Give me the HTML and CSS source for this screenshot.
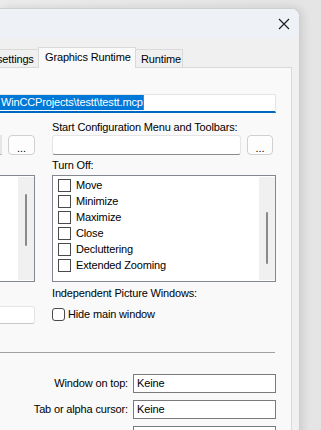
FILE: index.html
```html
<!DOCTYPE html>
<html lang="en">
<head>
    <meta charset="UTF-8">
    <meta name="viewport" content="width=device-width, initial-scale=1.0">
    <title>Computer Properties</title>
    <link rel="stylesheet" href="styles.css">
</head>
<body>

    <div class="window">
        <div class="titlebar">
            <svg class="close" width="12" height="12" viewBox="0 0 12 12">
                <path d="M1 1 L11 11 M11 1 L1 11" stroke="#1a1a1a" stroke-width="1.1" fill="none"/>
            </svg>
        </div>

        <div class="client">
            <div class="tabs">
                <div class="tab first">settings</div>
                <div class="tab active">Graphics Runtime</div>
                <div class="tab">Runtime</div>
            </div>

            <div class="page">
                <div class="path-field">
                    <span class="selected">WinCCProjects\testt\testt.mcp</span><span class="caret"></span>
                </div>

                <div class="grid">
                    <div></div>
                    <div class="label bottom">Start Configuration Menu and Toolbars:</div>

                    <div class="pick">
                        <div class="field"></div>
                        <button class="dots">...</button>
                    </div>
                    <div class="pick">
                        <div class="field"></div>
                        <button class="dots">...</button>
                    </div>

                    <div></div>
                    <div class="label middle">Turn Off:</div>

                    <div class="listbox left-list">
                        <div class="items"></div>
                        <div class="scroll"><div class="thumb thumb-left"></div></div>
                    </div>
                    <div class="listbox">
                        <div class="items">
                            <label class="item"><span class="box"></span>Move</label>
                            <label class="item"><span class="box"></span>Minimize</label>
                            <label class="item"><span class="box"></span>Maximize</label>
                            <label class="item"><span class="box"></span>Close</label>
                            <label class="item"><span class="box"></span>Decluttering</label>
                            <label class="item"><span class="box"></span>Extended Zooming</label>
                        </div>
                        <div class="scroll"><div class="thumb thumb-right"></div></div>
                    </div>

                    <div></div>
                    <div class="label top">Independent Picture Windows:</div>

                    <div class="field small"></div>
                    <label class="check"><span class="box round"></span>Hide main window</label>
                </div>

                <div class="separator"></div>

                <div class="form-rows">
                    <div class="row-label">Window on top:</div>
                    <div class="value">Keine</div>
                    <div class="row-label">Tab or alpha cursor:</div>
                    <div class="value">Keine</div>
                    <div class="row-label"></div>
                    <div class="value"></div>
                </div>
            </div>
        </div>
    </div>

</body>
</html>
```

FILE: styles.css
```css
body {
    margin: 0;
    width: 321px;
    height: 430px;
    overflow: hidden;
    background: linear-gradient(to right, #ececec, #e4e4e4);
    font-family: "Liberation Sans", Arial, sans-serif;
    font-size: 11px;
    letter-spacing: -0.15px;
    color: #000;
}

.window {
    width: 300px;
    height: 430px;
    margin-top: 8px;
    border-top: 1px solid #cfcfcf;
    border-right: 1px solid #cfcfcf;
    border-top-right-radius: 8px;
    box-shadow: 2px 0 10px rgba(0, 0, 0, 0.12);
    box-sizing: border-box;
    overflow: hidden;
    background: #f0f0f0;
}

.titlebar {
    height: 29px;
    background: #eef2f7;
    display: flex;
    align-items: center;
    justify-content: flex-end;
    padding-right: 9px;
}

.close {
    display: block;
    margin-top: 1px;
}

.client {
    padding-right: 7px;
}

.tabs {
    height: 29px;
    display: flex;
    align-items: flex-end;
    position: relative;
    z-index: 1;
}

.tab {
    height: 18px;
    line-height: 19px;
    padding: 0 5px;
    border: 1px solid #d9d9d9;
    border-bottom: none;
    background: #f0f0f0;
    box-sizing: border-box;
    white-space: nowrap;
    overflow: hidden;
}

.tab.first {
    margin-left: -6px;
    width: 44px;
    padding: 0 0 0 2px;
    border-right: none;
}

.tab.active {
    height: 21px;
    line-height: 18px;
    width: 98px;
    padding-left: 6px;
    background: #f9f9f9;
    margin-bottom: -1px;
}

.tab.active + .tab {
    border-left: none;
    width: 47px;
    padding-left: 5px;
}

.page {
    height: 400px;
    border-top: 1px solid #d9d9d9;
    border-right: 1px solid #d9d9d9;
    background: #f9f9f9;
    padding: 26px 15px 0 0;
}

.path-field {
    height: 19px;
    background: #fff;
    border: 1px solid #e5e5e5;
    border-left: none;
    border-bottom: 2px solid #0067c0;
    box-sizing: border-box;
    display: flex;
    align-items: flex-start;
}

.selected {
    display: inline-block;
    background: #0078d7;
    color: #fff;
    line-height: 15px;
    padding-left: 1px;
}

.caret {
    width: 1px;
    height: 15px;
    background: #c8641e;
}

.grid {
    display: grid;
    grid-template-columns: 35px 1fr;
    grid-template-rows: 22px 20px 20px 107px 24px 20px;
    column-gap: 17px;
}

.label {
    line-height: 16px;
}

.label.bottom {
    align-self: end;
}

.label.middle {
    align-self: center;
}

.label.top {
    margin-top: 3px;
}

.pick {
    display: flex;
    gap: 6px;
}

.pick:first-of-type {
    margin-left: -5px;
}

.field {
    flex: 1;
    background: #fff;
    border: 1px solid #e5e5e5;
    border-bottom-color: #8a8a8a;
    border-radius: 3px;
}

.dots {
    width: 27px;
    height: 20px;
    padding: 6px 0 0;
    font: inherit;
    line-height: 10px;
    background: #fdfdfd;
    border: 1px solid #d0d0d0;
    border-radius: 4px;
    color: #000;
}

.pick + .pick .dots {
    width: 26px;
    margin-right: 3px;
}

.listbox {
    display: flex;
    background: #fff;
    border: 1px solid #828790;
    height: 107px;
    box-sizing: border-box;
}

.left-list {
    border-left: none;
}

.items {
    flex: 1;
    padding: 1px 0 0 5px;
}

.item {
    display: flex;
    align-items: center;
    height: 16px;
}

.box {
    width: 11px;
    height: 11px;
    border: 1px solid #4a4a4a;
    background: #fff;
    margin-right: 5px;
}

.box.round {
    border-radius: 3px;
    margin-right: 3px;
}

.scroll {
    width: 16px;
    margin: 1px 0;
    background: #f0f0f0;
    position: relative;
}

.thumb {
    position: absolute;
    left: 7px;
    width: 2px;
    background: #8a8a8a;
    border-radius: 1px;
}

.thumb-left {
    top: 17px;
    height: 52px;
}

.thumb-right {
    top: 35px;
    height: 52px;
}

.field.small {
    height: 18px;
    box-sizing: border-box;
    margin-left: -10px;
    border-bottom-color: #c8c8c8;
}

.check {
    display: flex;
    align-items: center;
    height: 16px;
}

.separator {
    height: 1px;
    background: #a0a0a0;
    margin-top: 26px;
    margin-right: 1px;
}

.form-rows {
    display: grid;
    grid-template-columns: 128px 1fr;
    grid-auto-rows: 19px;
    column-gap: 5px;
    row-gap: 7px;
    margin-top: 21px;
}

.row-label {
    text-align: right;
    line-height: 19px;
}

.value {
    background: #fff;
    border: 1px solid #7a7a7a;
    box-sizing: border-box;
    padding-left: 3px;
    line-height: 17px;
}
```
